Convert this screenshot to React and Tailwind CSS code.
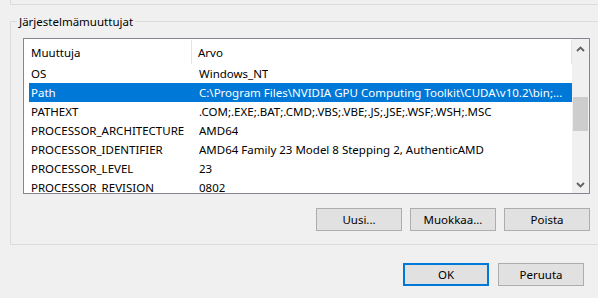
import React from 'react';

const rows = [
    { name: 'OS', value: 'Windows_NT' },
    { name: 'Path', value: 'C:\\Program Files\\NVIDIA GPU Computing Toolkit\\CUDA\\v10.2\\bin;...', selected: true },
    { name: 'PATHEXT', value: '.COM;.EXE;.BAT;.CMD;.VBS;.VBE;.JS;.JSE;.WSF;.WSH;.MSC' },
    { name: 'PROCESSOR_ARCHITECTURE', value: 'AMD64' },
    { name: 'PROCESSOR_IDENTIFIER', value: 'AMD64 Family 23 Model 8 Stepping 2, AuthenticAMD' },
    { name: 'PROCESSOR_LEVEL', value: '23' },
    { name: 'PROCESSOR_REVISION', value: '0802' },
];

// Small bold chevron used by the scrollbar arrows
const Chevron = ({ up }) => (
    <svg width="9" height="6" viewBox="0 0 9 6">
        <polyline
            points={up ? '1,5 4.5,1.5 8,5' : '1,1 4.5,4.5 8,1'}
            fill="none"
            stroke="#606060"
            strokeWidth="1.8"
        />
    </svg>
);

const Button = ({ children, primary }) => (
    <button
        className={
            primary
                ? 'w-[86px] h-[23px] bg-[#e1e1e1] border-2 border-[#0078d7] text-[11.5px] text-black'
                : 'w-[86px] h-[23px] bg-[#e1e1e1] border border-[#adadad] text-[11.5px] text-black'
        }
    >
        {children}
    </button>
);

const App = () => {
    return (
        <div
            className="w-[598px] h-[298px] bg-[#f0f0f0] overflow-hidden text-[11.5px] text-black"
            style={{ fontFamily: '"Noto Sans", "Open Sans", sans-serif' }}
        >
            {/* Bottom of the previous group box */}
            <div className="ml-[10px] w-[600px] h-[5px] border-l border-b border-[#dcdcdc]" />

            {/* Järjestelmämuuttujat group */}
            <fieldset className="mt-[8px] ml-[10px] w-[600px] border border-[#dcdcdc] pl-[12px] pb-[13px]">
                <legend className="ml-[-6px] px-[2px] leading-[16px] pt-[1px]">Järjestelmämuuttujat</legend>

                {/* List view */}
                <div className="mt-[8px] w-[567px] h-[156px] border border-[#828790] bg-white flex">
                    <div className="flex-1 overflow-hidden">
                        <div className="flex h-[25px] items-center">
                            <div className="w-[168px] h-[24px] pl-[7px] pt-[3px] flex items-center border-r border-[#e5e5e5]">
                                Muuttuja
                            </div>
                            <div className="flex-1 h-[24px] pl-[6px] pt-[3px] flex items-center border-r border-[#e5e5e5]">
                                Arvo
                            </div>
                        </div>
                        {rows.map((row) => (
                            <div
                                key={row.name}
                                className={
                                    row.selected
                                        ? 'ml-[5px] h-[19px] flex items-center whitespace-nowrap bg-[#0078d7] text-white'
                                        : 'ml-[5px] h-[19px] flex items-center whitespace-nowrap'
                                }
                            >
                                <span className="w-[170px] shrink-0 pl-[2px]">{row.name}</span>
                                <span className="overflow-hidden">{row.value}</span>
                            </div>
                        ))}
                    </div>

                    {/* Scrollbar */}
                    <div className="w-[17px] bg-[#f0f0f0] flex flex-col">
                        <div className="h-[17px] pt-[2px] flex items-center justify-center">
                            <Chevron up />
                        </div>
                        <div className="flex-1 pt-[41px]">
                            <div className="mx-auto w-[15px] h-[34px] bg-[#cdcdcd]" />
                        </div>
                        <div className="h-[17px] flex items-center justify-center">
                            <Chevron />
                        </div>
                    </div>
                </div>

                <div className="mt-[14px] w-[567px] flex justify-end gap-[8px]">
                    <Button>Uusi...</Button>
                    <Button>Muokkaa...</Button>
                    <Button>Poista</Button>
                </div>
            </fieldset>

            <div className="mt-[18px] flex justify-end gap-[9px] pr-[14px]">
                <Button primary>OK</Button>
                <Button>Peruuta</Button>
            </div>
        </div>
    );
};

export default App;
